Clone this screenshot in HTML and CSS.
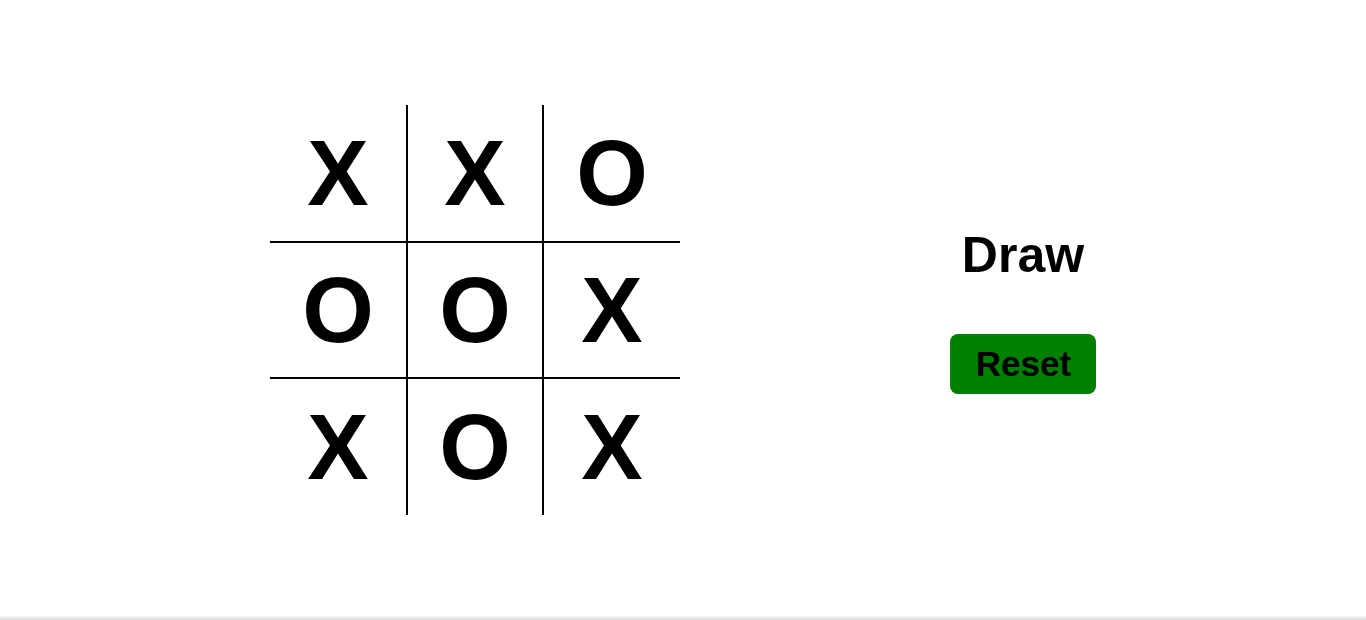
FILE: index.html
```html
<!DOCTYPE html>
<html lang="en">
<head>
<meta charset="utf-8">
<title>Tic Tac Toe</title>
<link rel="stylesheet" href="styles.css">
</head>
<body>
<main class="game">
  <div class="board">
    <div class="cell">X</div>
    <div class="cell mid-col">X</div>
    <div class="cell">O</div>
    <div class="cell mid-row">O</div>
    <div class="cell mid-row mid-col">O</div>
    <div class="cell mid-row">X</div>
    <div class="cell">X</div>
    <div class="cell mid-col">O</div>
    <div class="cell">X</div>
  </div>
  <div class="status">
    <h2 class="result">Draw</h2>
    <button class="reset">Reset</button>
  </div>
</main>
<div class="bottom-shade"></div>
</body>
</html>
```
FILE: styles.css
```css
html, body {
  margin: 0;
  padding: 0;
  height: 100%;
  background: #ffffff;
  font-family: "Liberation Sans", Arial, sans-serif;
  color: #000;
  overflow: hidden;
}

.game {
  height: 100%;
  display: flex;
  align-items: center;
  justify-content: space-evenly;
}

.board {
  display: grid;
  grid-template-columns: 136px 138px 136px;
  grid-template-rows: 136px 138px 136px;
}

.cell {
  box-sizing: border-box;
  display: flex;
  align-items: center;
  justify-content: center;
  font-size: 92px;
  font-weight: bold;
}

.mid-col {
  border-left: 2px solid #000;
  border-right: 2px solid #000;
}

.mid-row {
  border-top: 2px solid #000;
  border-bottom: 2px solid #000;
}

.status {
  width: 146px;
  display: flex;
  flex-direction: column;
  align-items: center;
  gap: 50px;
}

.result {
  margin: 0;
  font-size: 50px;
  font-weight: bold;
  white-space: nowrap;
}

.reset {
  width: 146px;
  height: 60px;
  border: none;
  border-radius: 8px;
  background: #008000;
  color: #000;
  font-family: "Liberation Sans", Arial, sans-serif;
  font-size: 35px;
  font-weight: bold;
  padding: 0 0 0 1px;
  cursor: pointer;
}

.bottom-shade {
  position: fixed;
  left: 0;
  right: 0;
  bottom: 0;
  height: 5px;
  background: linear-gradient(to bottom, rgba(0,0,0,0), rgba(0,0,0,0.14));
}
```
